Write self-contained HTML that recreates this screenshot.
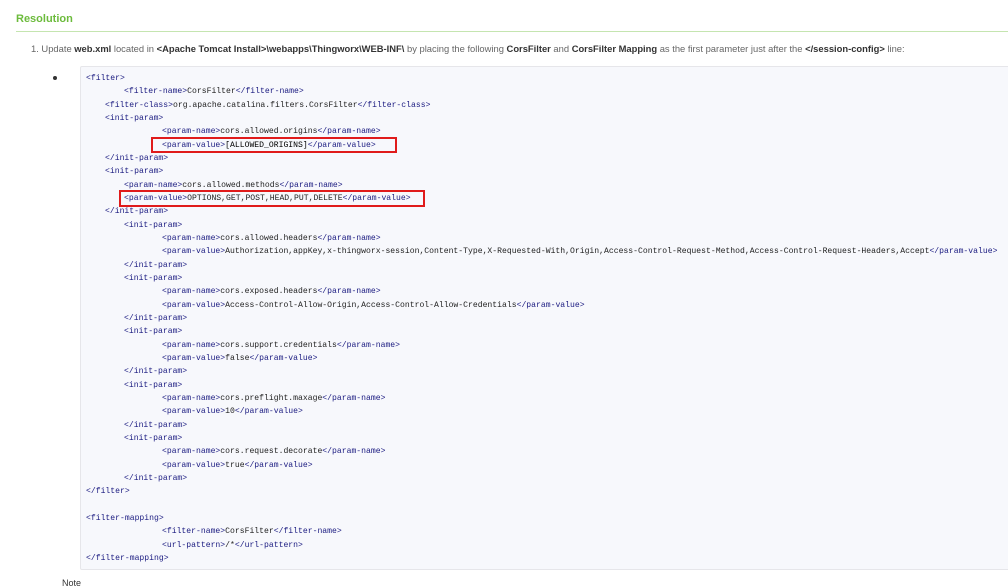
<!DOCTYPE html>
<html><head><meta charset="utf-8"><style>
html,body{margin:0;padding:0;background:#fff;width:1008px;height:582px;overflow:hidden;font-family:"Liberation Sans",sans-serif;}
.h{position:absolute;left:16px;top:13px;color:#6cbb3c;font-weight:bold;font-size:11px;}
.hr{position:absolute;left:16px;right:0;top:31px;height:1px;background:#c5e5b0;}
.p{position:absolute;left:31px;top:43px;font-size:9.4px;color:#666;white-space:nowrap;}
.p b{color:#333;}
.bul{position:absolute;left:53px;top:76px;width:4px;height:4px;border-radius:50%;background:#333;}
.box{position:absolute;left:80px;top:66px;width:940px;height:502px;background:#f7f8fc;border:1px solid #e6e6ea;border-radius:2px;}
.cw{position:absolute;left:0;top:2px;width:1008px;height:582px;}
.c{position:absolute;font-family:"Liberation Mono",monospace;font-size:8.1px;white-space:pre;color:#222;line-height:10px;}
.t{color:#1a1a80;}
.r{position:absolute;border:2px solid #e01b1b;box-sizing:border-box;}
.note{position:absolute;left:62px;top:578px;font-size:9px;color:#333;}
</style></head><body>
<div class="h">Resolution</div>
<div class="hr"></div>
<div class="p">1. Update <b>web.xml</b> located in <b>&lt;Apache Tomcat Install&gt;\webapps\Thingworx\WEB-INF\</b> by placing the following <b>CorsFilter</b> and <b>CorsFilter Mapping</b> as the first parameter just after the <b>&lt;/session-config&gt;</b> line:</div>
<div class="bul"></div>
<div class="box"></div>
<div class="cw">
<div class="c" style="left:86px;top:72px"><span class="t">&lt;filter&gt;</span></div>
<div class="c" style="left:124px;top:85.3px"><span class="t">&lt;filter-name&gt;</span>CorsFilter<span class="t">&lt;/filter-name&gt;</span></div>
<div class="c" style="left:105px;top:98.7px"><span class="t">&lt;filter-class&gt;</span>org.apache.catalina.filters.CorsFilter<span class="t">&lt;/filter-class&gt;</span></div>
<div class="c" style="left:105px;top:112px"><span class="t">&lt;init-param&gt;</span></div>
<div class="c" style="left:162px;top:125.3px"><span class="t">&lt;param-name&gt;</span>cors.allowed.origins<span class="t">&lt;/param-name&gt;</span></div>
<div class="c" style="left:162px;top:138.7px"><span class="t">&lt;param-value&gt;</span><span style="color:#000">[ALLOWED_ORIGINS]</span><span class="t">&lt;/param-value&gt;</span></div>
<div class="c" style="left:105px;top:152px"><span class="t">&lt;/init-param&gt;</span></div>
<div class="c" style="left:105px;top:165.3px"><span class="t">&lt;init-param&gt;</span></div>
<div class="c" style="left:124px;top:178.7px"><span class="t">&lt;param-name&gt;</span>cors.allowed.methods<span class="t">&lt;/param-name&gt;</span></div>
<div class="c" style="left:124px;top:192px"><span class="t">&lt;param-value&gt;</span>OPTIONS,GET,POST,HEAD,PUT,DELETE<span class="t">&lt;/param-value&gt;</span></div>
<div class="c" style="left:105px;top:205.3px"><span class="t">&lt;/init-param&gt;</span></div>
<div class="c" style="left:124px;top:218.7px"><span class="t">&lt;init-param&gt;</span></div>
<div class="c" style="left:162px;top:232px"><span class="t">&lt;param-name&gt;</span>cors.allowed.headers<span class="t">&lt;/param-name&gt;</span></div>
<div class="c" style="left:162px;top:245.3px"><span class="t">&lt;param-value&gt;</span>Authorization,appKey,x-thingworx-session,Content-Type,X-Requested-With,Origin,Access-Control-Request-Method,Access-Control-Request-Headers,Accept<span class="t">&lt;/param-value&gt;</span></div>
<div class="c" style="left:124px;top:258.7px"><span class="t">&lt;/init-param&gt;</span></div>
<div class="c" style="left:124px;top:272px"><span class="t">&lt;init-param&gt;</span></div>
<div class="c" style="left:162px;top:285.3px"><span class="t">&lt;param-name&gt;</span>cors.exposed.headers<span class="t">&lt;/param-name&gt;</span></div>
<div class="c" style="left:162px;top:298.7px"><span class="t">&lt;param-value&gt;</span>Access-Control-Allow-Origin,Access-Control-Allow-Credentials<span class="t">&lt;/param-value&gt;</span></div>
<div class="c" style="left:124px;top:312px"><span class="t">&lt;/init-param&gt;</span></div>
<div class="c" style="left:124px;top:325.3px"><span class="t">&lt;init-param&gt;</span></div>
<div class="c" style="left:162px;top:338.7px"><span class="t">&lt;param-name&gt;</span>cors.support.credentials<span class="t">&lt;/param-name&gt;</span></div>
<div class="c" style="left:162px;top:352px"><span class="t">&lt;param-value&gt;</span>false<span class="t">&lt;/param-value&gt;</span></div>
<div class="c" style="left:124px;top:365.3px"><span class="t">&lt;/init-param&gt;</span></div>
<div class="c" style="left:124px;top:378.7px"><span class="t">&lt;init-param&gt;</span></div>
<div class="c" style="left:162px;top:392px"><span class="t">&lt;param-name&gt;</span>cors.preflight.maxage<span class="t">&lt;/param-name&gt;</span></div>
<div class="c" style="left:162px;top:405.3px"><span class="t">&lt;param-value&gt;</span>10<span class="t">&lt;/param-value&gt;</span></div>
<div class="c" style="left:124px;top:418.7px"><span class="t">&lt;/init-param&gt;</span></div>
<div class="c" style="left:124px;top:432px"><span class="t">&lt;init-param&gt;</span></div>
<div class="c" style="left:162px;top:445.3px"><span class="t">&lt;param-name&gt;</span>cors.request.decorate<span class="t">&lt;/param-name&gt;</span></div>
<div class="c" style="left:162px;top:458.7px"><span class="t">&lt;param-value&gt;</span>true<span class="t">&lt;/param-value&gt;</span></div>
<div class="c" style="left:124px;top:472px"><span class="t">&lt;/init-param&gt;</span></div>
<div class="c" style="left:86px;top:485.3px"><span class="t">&lt;/filter&gt;</span></div>
<div class="c" style="left:86px;top:512px"><span class="t">&lt;filter-mapping&gt;</span></div>
<div class="c" style="left:162px;top:525.3px"><span class="t">&lt;filter-name&gt;</span>CorsFilter<span class="t">&lt;/filter-name&gt;</span></div>
<div class="c" style="left:162px;top:538.7px"><span class="t">&lt;url-pattern&gt;</span>/*<span class="t">&lt;/url-pattern&gt;</span></div>
<div class="c" style="left:86px;top:552px"><span class="t">&lt;/filter-mapping&gt;</span></div>
</div>
<div class="r" style="left:151px;top:137px;width:246px;height:16px"></div>
<div class="r" style="left:119px;top:190px;width:306px;height:17px"></div>
<div class="note">Note</div>
</body></html>
